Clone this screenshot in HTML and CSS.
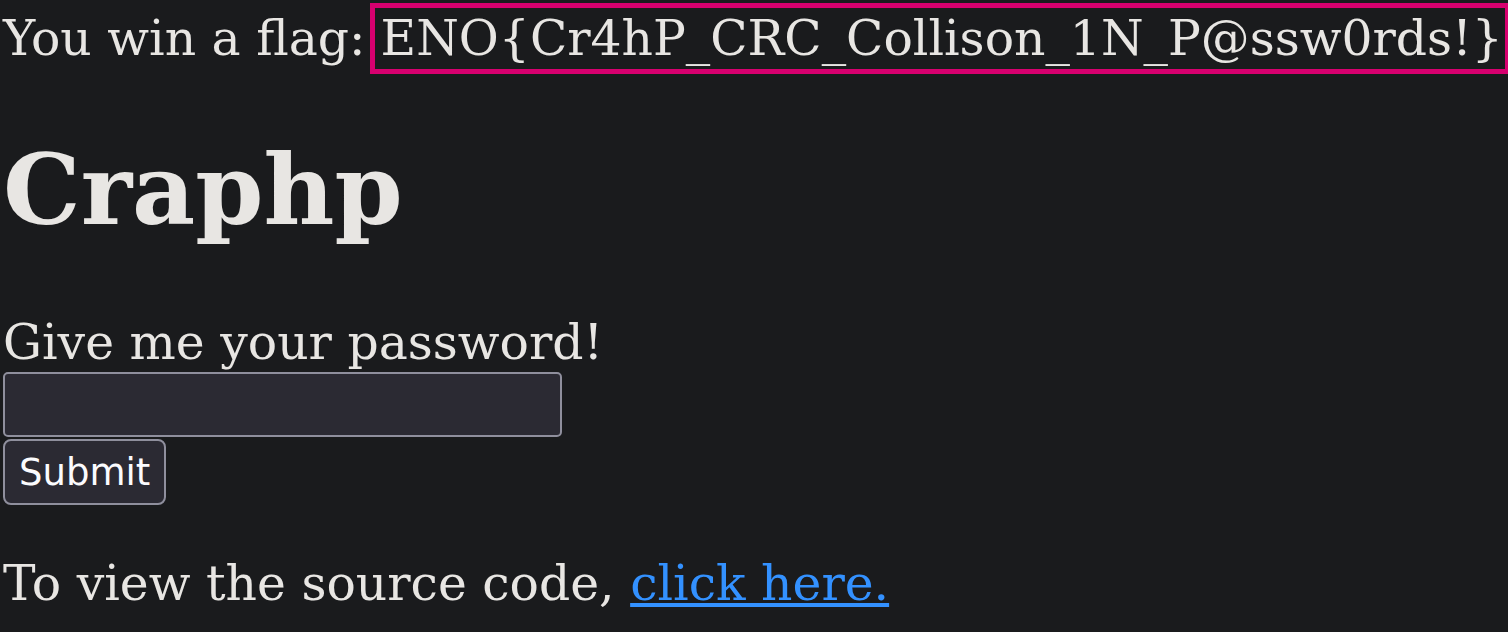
FILE: index.html
```html
<!DOCTYPE html>
<html>
<head>
<meta charset="utf-8">
<title>Craphp</title>
<link rel="stylesheet" href="styles.css">
</head>
<body>
<p class="win">You win a flag:<span class="flag">ENO{Cr4hP_CRC_Collison_1N_P@ssw0rds!}</span></p>
<h1 class="title">Craphp</h1>
<form class="form">
  <label class="label" for="pw">Give me your password!</label>
  <input class="field" id="pw" type="text">
  <button class="submit" type="button">Submit</button>
</form>
<p class="source">To view the source code, <a class="link" href="#">click here.</a></p>
</body>
</html>
```
FILE: styles.css
```css
html {
  background: #1a1b1d;
}
body {
  margin: 0;
  padding: 10px 0 0 3px;
  background: #1a1b1d;
  color: #e8e6e3;
  font-family: "DejaVu Serif", serif;
  font-size: 48.8px;
}
.win {
  margin: 0;
  white-space: nowrap;
}
.flag {
  margin-left: 4px;
  border: 5px solid #d7006f;
  padding: 2px 2px 2px 6px;
}
.title {
  font-size: 97.6px;
  font-weight: bold;
  margin: 66px 0 0;
  line-height: 1.16;
}
.form {
  display: flex;
  flex-direction: column;
  align-items: flex-start;
  margin-top: 68px;
}
.label {
  display: block;
}
.field {
  width: 559px;
  height: 65px;
  box-sizing: border-box;
  margin: 1px 0 0;
  background: #2b2a33;
  border: 2px solid #8f8f9d;
  border-radius: 5px;
  color: #e8e6e3;
}
.submit {
  margin: 2px 0 0;
  height: 66px;
  padding: 0 14px;
  background: #2b2a33;
  border: 2px solid #8f8f9d;
  border-radius: 8px;
  color: #fbfbfe;
  font-family: "DejaVu Sans", sans-serif;
  font-size: 37px;
}
.source {
  margin: 50px 0 0;
}
.link {
  color: #3391ff;
}
```
